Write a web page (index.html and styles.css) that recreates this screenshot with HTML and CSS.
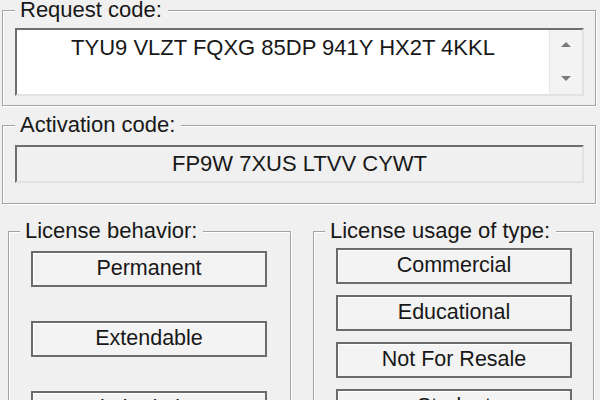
FILE: index.html
```html
<!DOCTYPE html>
<html lang="en">
<head>
    <meta charset="UTF-8">
    <meta name="viewport" content="width=device-width, initial-scale=1.0">
    <title>License Activation</title>
    <link rel="stylesheet" href="styles.css">
</head>
<body>
    <div class="dialog">
        <fieldset class="group group-request">
            <legend>Request code:</legend>
            <div class="code-box">
                <div class="code-text">TYU9 VLZT FQXG 85DP 941Y HX2T 4KKL</div>
                <div class="scrollbar">
                    <svg class="arrow" width="12" height="7" viewBox="0 0 12 7"><path d="M1 6 L6 1 L11 6 Z" fill="#7a7a7a"/></svg>
                    <svg class="arrow" width="12" height="7" viewBox="0 0 12 7"><path d="M1 1 L6 6 L11 1 Z" fill="#7a7a7a"/></svg>
                </div>
            </div>
        </fieldset>

        <fieldset class="group group-activation">
            <legend>Activation code:</legend>
            <div class="code-field">FP9W 7XUS LTVV CYWT</div>
        </fieldset>

        <div class="options">
            <fieldset class="group group-behavior">
                <legend>License behavior:</legend>
                <div class="button-list">
                    <button type="button">Permanent</button>
                    <button type="button">Extendable</button>
                    <button type="button">Limited Time</button>
                </div>
            </fieldset>
            <fieldset class="group group-usage">
                <legend>License usage of type:</legend>
                <div class="button-list">
                    <button type="button">Commercial</button>
                    <button type="button">Educational</button>
                    <button type="button">Not For Resale</button>
                    <button type="button">Student</button>
                </div>
            </fieldset>
        </div>
    </div>
</body>
</html>
```

FILE: styles.css
```css
body {
    font-family: "Liberation Sans", Arial, sans-serif;
    font-size: 22px;
    color: #181818;
    background-color: #f0f0f0;
    margin: 0;
    height: 400px;
    overflow: hidden;
}
.group {
    border: 1px solid #a3a3a3;
    box-shadow: inset 1px 1px 0 #fff, 1px 1px 0 #fff;
    box-sizing: border-box;
    min-inline-size: 0;
}
.group legend {
    line-height: 22px;
    padding: 0 6px 0 5px;
    background-color: #f0f0f0;
}
.group-request {
    margin: -1px 4px 0 2px;
    padding: 7px 11px 9px 12px;
}
.group-activation {
    margin: 8px 4px 0 2px;
    padding: 9px 11px 20px 12px;
}
.code-box {
    display: flex;
    height: 68px;
    box-sizing: border-box;
    background-color: #fff;
    border: 2px solid;
    border-color: #6e6e6e #e2e2e2 #e2e2e2 #6e6e6e;
}
.code-text {
    flex: 1;
    text-align: center;
    line-height: 24px;
    padding-top: 6px;
}
.scrollbar {
    width: 32px;
    background-color: #f3f3f3;
    border-left: 1px solid #e6e6e6;
    display: flex;
    flex-direction: column;
    align-items: center;
    justify-content: space-between;
    padding: 11px 0 12px;
}
.code-field {
    height: 38px;
    box-sizing: border-box;
    border: 2px solid;
    border-color: #6e6e6e #e2e2e2 #e2e2e2 #6e6e6e;
    text-align: center;
    line-height: 34px;
}
.options {
    display: flex;
    gap: 22px;
    margin-top: 16px;
}
.group-behavior {
    width: 283px;
    margin: 0 0 0 8px;
    padding: 9px 0 0 22px;
}
.group-usage {
    width: 281px;
    margin: 0;
    padding: 6px 0 0 22px;
}
.group-behavior legend,
.group-usage legend {
    margin-left: -11px;
}
.button-list {
    display: flex;
    flex-direction: column;
    gap: 34px;
}
.group-usage .button-list {
    gap: 11px;
}
button {
    width: 236px;
    height: 36px;
    font-family: "Liberation Sans", Arial, sans-serif;
    font-size: 21.5px;
    color: #181818;
    background-color: #f3f3f3;
    border: 2px solid #6b6b6b;
    box-shadow: inset 1px 1px 0 #fff;
    padding: 0 0 2px;
    cursor: pointer;
}
```
